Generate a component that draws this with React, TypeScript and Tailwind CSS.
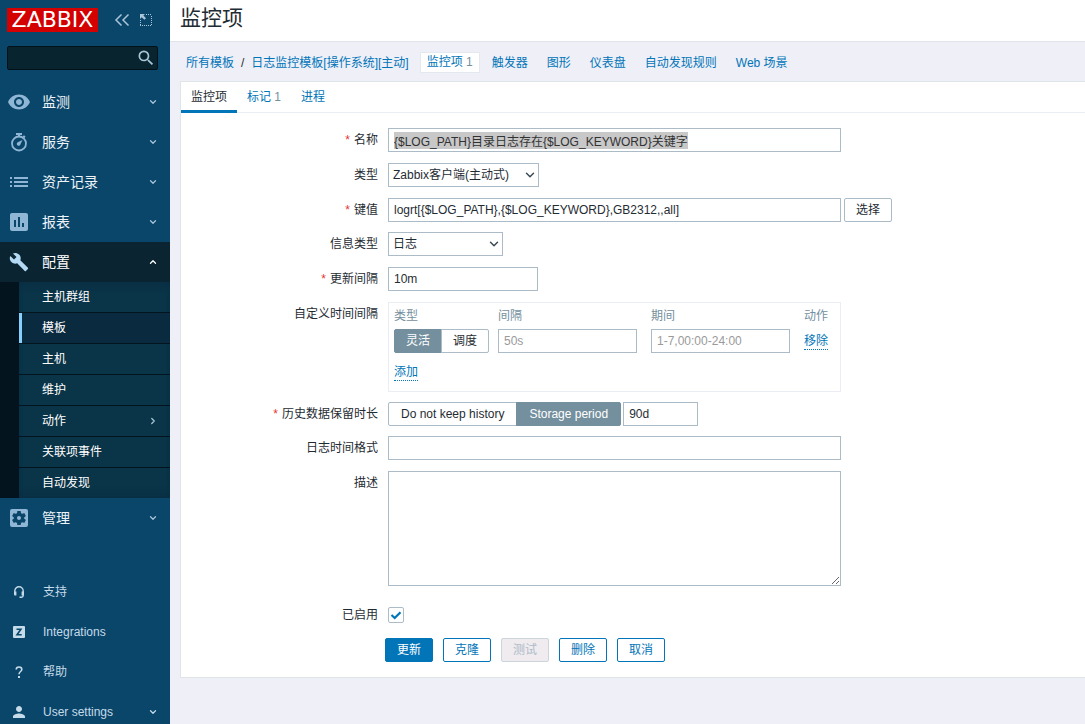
import React, { useEffect, useRef, useState } from "react";
import { ChevronDown, ChevronRight, ChevronUp } from "lucide-react";
import {
  MdAssessment,
  MdBuild,
  MdPerson,
  MdSearch,
  MdSettingsApplications,
  MdVisibility,
} from "react-icons/md";

const StopwatchIcon = () => (
  <svg width="18" height="20" viewBox="0 0 18 20" fill="none">
    <circle cx="9" cy="11.5" r="7" stroke="currentColor" strokeWidth="1.8" />
    <path d="M6 1h6v2H6zM8 2h2v3H8zM14 3.2l1.6 1.6-1.4 1.4-1.6-1.6z" fill="currentColor" />
    <path d="M12.5 8l-2 4.2a1.9 1.9 0 1 1-2.2-2.2z" fill="currentColor" />
  </svg>
);

const ListIcon = () => (
  <svg width="18" height="12" viewBox="0 0 18 12" fill="currentColor">
    <path d="M0 1h2v2H0zM4 1h14v2H4zM0 5h2v2H0zM4 5h14v2H4zM0 9h2v2H0zM4 9h14v2H4z" />
  </svg>
);

const CollapseIcon = () => (
  <svg width="16" height="14" viewBox="0 0 16 14" fill="none" stroke="currentColor" strokeWidth="1.5">
    <path d="M7.5 1.5L2 7l5.500 5.500M14.500 1.500L9 7l5.500 5.500" />
  </svg>
);

const KioskIcon = () => (
  <svg width="12" height="12" viewBox="0 0 12 12" fill="none">
    <path
      d="M6 .5h6M11.5 2v10M0 11.5h11M.5 6v5"
      stroke="currentColor"
      strokeDasharray="1 1"
    />
    <path d="M0 0h5L3.400 1.600 6 4.200 4.400 5.800 1.700 3.200 0 5z" fill="currentColor" />
  </svg>
);

const HeadsetIcon = () => (
  <svg width="12" height="12" viewBox="0 0 12 12" fill="none">
    <path d="M1.800 7V5a4.200 4.200 0 0 1 8.400 0v4.500c0 1-.8 1.700-1.800 1.700H6.500" stroke="currentColor" strokeWidth="1.4" />
    <path d="M1 5.500h2.400v4H2A1 1 0 0 1 1 8.500zM8.600 5.500H11v3a1 1 0 0 1-1 1H8.600z" fill="currentColor" />
  </svg>
);

const IntegrationsIcon = () => (
  <svg width="12" height="12" viewBox="0 0 12 12">
    <rect width="12" height="12" rx="1" fill="currentColor" />
    <path d="M3.500 3.200h4.400L4 8.800h4.700" fill="none" stroke="#0a466a" strokeWidth="1.6" />
  </svg>
);

const HelpIcon = () => (
  <svg width="8" height="12" viewBox="0 0 8 12">
    <path d="M1.200 3.600C1.200 1.900 2.300 1 4 1s2.800 1 2.800 2.500C6.800 5.500 4 5.600 4 8.300" fill="none" stroke="currentColor" strokeWidth="1.6" />
    <rect x="3" y="10" width="2" height="2" fill="currentColor" />
  </svg>
);

interface MenuItem {
  label: string;
  icon: React.ReactNode;
  arrow?: boolean;
}

const topMenu: MenuItem[] = [
  { label: "监测", icon: <MdVisibility size={24} /> },
  { label: "服务", icon: <StopwatchIcon /> },
  { label: "资产记录", icon: <ListIcon /> },
  { label: "报表", icon: <MdAssessment size={24} /> },
];

const subMenu = ["主机群组", "模板", "主机", "维护", "动作", "关联项事件", "自动发现"];

const userMenu: MenuItem[] = [
  { label: "支持", icon: <HeadsetIcon /> },
  { label: "Integrations", icon: <IntegrationsIcon /> },
  { label: "帮助", icon: <HelpIcon /> },
  { label: "User settings", icon: <MdPerson size={18} />, arrow: true },
];

const MainMenuLink: React.FC<{ item: MenuItem; open?: boolean }> = ({ item, open }) => (
  <a
    href="#"
    className={`flex h-10 items-center pr-3 text-sm ${
      open ? "bg-[#0a2531] text-white" : "text-[#eef4f8]"
    }`}
  >
    <span
      className={`flex w-[38px] shrink-0 justify-center ${open ? "text-[#b3d9f5]" : "text-[#8fb6d4]"}`}
    >
      {item.icon}
    </span>
    <span className="ml-1 flex-1">{item.label}</span>
    {open ? (
      <ChevronUp size={10} strokeWidth={3} />
    ) : (
      <ChevronDown size={10} strokeWidth={3} className="text-[#a9c5d8]" />
    )}
  </a>
);

const Sidebar = () => (
  <aside className="h-screen w-[170px] shrink-0 overflow-hidden bg-[#0a466a]">
    <div className="flex items-center pt-2 pl-[7px] text-[#a9c5d8]">
      <a
        href="#"
        className="flex h-6 w-[91px] items-center justify-center bg-[#d40000] font-['DejaVu_Sans',sans-serif] text-[22px] leading-6 text-white"
      >
        ZABBIX
      </a>
      <button type="button" aria-label="隐藏侧边栏" className="ml-4">
        <CollapseIcon />
      </button>
      <button type="button" aria-label="全屏" className="ml-2.5">
        <KioskIcon />
      </button>
    </div>
    <form
      role="search"
      className="mt-3.5 mr-3 ml-[7px] flex h-6 items-center rounded-xs border border-[#021019] bg-[#08242f]"
    >
      <input
        type="search"
        aria-label="搜索"
        className="h-full min-w-0 flex-1 bg-transparent px-1 text-white outline-none"
      />
      <button type="button" aria-label="搜索" className="mr-px text-[#a9c5d8]">
        <MdSearch size={20} />
      </button>
    </form>
    <nav className="mt-3">
      {topMenu.map((item) => (
        <MainMenuLink key={item.label} item={item} />
      ))}
      <MainMenuLink item={{ label: "配置", icon: <MdBuild size={20} /> }} open />
      <div className="bg-[#03141f] pl-[19px]">
        <ul className="divide-y divide-[#04141f] bg-[#0a3447] shadow-[inset_0_8px_8px_-6px_#0a2c45,inset_0_-8px_8px_-6px_#0a2c45]">
          {subMenu.map((label) => (
            <li key={label}>
              <a
                href="#"
                className={`flex h-[30px] items-center border-l-3 pr-3 pl-5 text-white ${
                  label === "模板" ? "border-[#85d0ff] bg-[#0a2a40]" : "border-transparent"
                }`}
              >
                <span className="flex-1">{label}</span>
                {label === "动作" && (
                  <ChevronRight size={10} strokeWidth={3} className="text-[#a9c5d8]" />
                )}
              </a>
            </li>
          ))}
        </ul>
      </div>
      <MainMenuLink item={{ label: "管理", icon: <MdSettingsApplications size={24} /> }} />
    </nav>
    <nav className="mt-[34px] text-[#c5dbe9]">
      {userMenu.map((item) => (
        <a key={item.label} href="#" className="flex h-10 items-center pr-3">
          <span className="flex w-[38px] justify-center">{item.icon}</span>
          <span className="ml-[5px] flex-1">{item.label}</span>
          {item.arrow && <ChevronDown size={10} strokeWidth={3} />}
        </a>
      ))}
    </nav>
  </aside>
);

const linkColor = "text-[#0275b8]";
const fieldStyle =
  "h-6 border border-[#acbbc8] bg-white px-[5px] leading-[15px] text-[#1f2c33] outline-none placeholder:text-[#9a9a9a]";

interface RowProps {
  label: string;
  htmlFor?: string;
  required?: boolean;
  className?: string;
  children: React.ReactNode;
}

const FormRow: React.FC<RowProps> = ({ label, htmlFor, required, className, children }) => (
  <div className={`flex items-start ${className ?? "mb-[11px]"}`}>
    <label htmlFor={htmlFor} className="w-[207px] shrink-0 pr-2.5 text-right leading-6">
      {required && <span className="mr-1 text-[#e33734]">*</span>}
      {label}
    </label>
    {children}
  </div>
);

const SelectField: React.FC<{ id: string; options: string[]; className: string }> = ({
  id,
  options,
  className,
}) => (
  <div className={`grid items-center ${className}`}>
    <select
      id={id}
      className="col-start-1 row-start-1 h-6 w-full appearance-none border border-[#acbbc8] bg-white pl-1 outline-none"
    >
      {options.map((option) => (
        <option key={option}>{option}</option>
      ))}
    </select>
    <ChevronDown
      size={14}
      strokeWidth={2.5}
      className="pointer-events-none col-start-1 row-start-1 mr-0.5 justify-self-end text-[#3c4a55]"
    />
  </div>
);

interface SegmentedProps {
  name: string;
  options: string[];
  initial: string;
  padding: string;
}

const Segmented: React.FC<SegmentedProps> = ({ name, options, initial, padding }) => {
  const [value, setValue] = useState(initial);

  return (
    <div role="radiogroup" aria-label={name} className="relative flex h-6">
      {options.map((option) => (
        <label
          key={option}
          className={`flex items-center border first:rounded-l-xs last:rounded-r-xs not-first:-ml-px ${padding} ${
            value === option
              ? "border-[#748f9e] bg-[#748f9e] text-white"
              : "border-[#acbbc8] bg-white"
          }`}
        >
          <input
            type="radio"
            name={name}
            value={option}
            checked={value === option}
            onChange={() => setValue(option)}
            className="sr-only"
          />
          {option}
        </label>
      ))}
    </div>
  );
};

const IntervalTable = () => (
  <div className="w-[453px] border border-[#ebedf5] px-[5px] pt-[3px] pb-2.5">
    <table className="w-full table-fixed text-left">
      <thead>
        <tr className="h-[23px] align-top leading-5 text-[#748f9e]">
          <th className="w-[104px] font-normal">类型</th>
          <th className="w-[153px] font-normal">间隔</th>
          <th className="w-[153px] font-normal">期间</th>
          <th className="font-normal">动作</th>
        </tr>
      </thead>
      <tbody>
        <tr>
          <td>
            <Segmented
              name="interval-type"
              options={["灵活", "调度"]}
              initial="灵活"
              padding="px-[11px]"
            />
          </td>
          <td>
            <input aria-label="间隔" placeholder="50s" className={`${fieldStyle} block w-[139px]`} />
          </td>
          <td>
            <input
              aria-label="期间"
              placeholder="1-7,00:00-24:00"
              className={`${fieldStyle} block w-[139px]`}
            />
          </td>
          <td>
            <button type="button" className={`border-b border-dotted border-[#0275b8] leading-4 ${linkColor}`}>
              移除
            </button>
          </td>
        </tr>
      </tbody>
    </table>
    <button
      type="button"
      className={`mt-[11px] block border-b border-dotted border-[#0275b8] leading-4 ${linkColor}`}
    >
      添加
    </button>
  </div>
);

const ItemForm = () => {
  const [name, setName] = useState("{$LOG_PATH}目录日志存在{$LOG_KEYWORD}关键字");
  const [enabled, setEnabled] = useState(true);
  const nameRef = useRef<HTMLInputElement>(null);

  useEffect(() => {
    nameRef.current?.focus();
    nameRef.current?.select();
  }, []);

  const outlineButton = `h-6 w-12 rounded-xs border border-[#0275b8] bg-white ${linkColor}`;

  return (
    <form className="pt-[15px] pb-[15px]" onSubmit={(e) => e.preventDefault()}>
      <FormRow label="名称" htmlFor="name" required>
        <input
          id="name"
          ref={nameRef}
          value={name}
          onChange={(e) => setName(e.target.value)}
          className={`${fieldStyle} w-[453px] selection:bg-[#c8c8c8] selection:text-[#323232]`}
        />
      </FormRow>
      <FormRow label="类型" htmlFor="type">
        <SelectField id="type" options={["Zabbix客户端(主动式)"]} className="w-[151px]" />
      </FormRow>
      <FormRow label="键值" htmlFor="key" required className="mb-2.5">
        <input
          id="key"
          defaultValue="logrt[{$LOG_PATH},{$LOG_KEYWORD},GB2312,,all]"
          className={`${fieldStyle} w-[453px]`}
        />
        <button type="button" className="ml-[3px] h-6 w-12 rounded-xs border border-[#acbbc8] bg-white">
          选择
        </button>
      </FormRow>
      <FormRow label="信息类型" htmlFor="value-type">
        <SelectField id="value-type" options={["日志"]} className="w-[115px]" />
      </FormRow>
      <FormRow label="更新间隔" htmlFor="delay" required>
        <input id="delay" defaultValue="10m" className={`${fieldStyle} w-[150px]`} />
      </FormRow>
      <FormRow label="自定义时间间隔" className="mb-2.5">
        <IntervalTable />
      </FormRow>
      <FormRow label="历史数据保留时长" htmlFor="history" required className="mb-2.5">
        <Segmented
          name="history-mode"
          options={["Do not keep history", "Storage period"]}
          initial="Storage period"
          padding="px-3"
        />
        <input id="history" defaultValue="90d" className={`${fieldStyle} ml-0.5 w-[75px]`} />
      </FormRow>
      <FormRow label="日志时间格式" htmlFor="logtimefmt">
        <input id="logtimefmt" className={`${fieldStyle} w-[453px]`} />
      </FormRow>
      <FormRow label="描述" htmlFor="description" className="mb-[17px]">
        <textarea
          id="description"
          className="h-[115px] w-[453px] border border-[#acbbc8] bg-white px-[5px] py-1 outline-none"
        />
      </FormRow>
      <FormRow label="已启用" htmlFor="enabled">
        <span className="mt-1 grid">
          <input
            id="enabled"
            type="checkbox"
            checked={enabled}
            onChange={(e) => setEnabled(e.target.checked)}
            className="col-start-1 row-start-1 size-4 appearance-none rounded-xs border border-[#acbbc8] bg-white"
          />
          {enabled && (
            <svg
              viewBox="0 0 16 16"
              className="pointer-events-none col-start-1 row-start-1 size-4"
              fill="none"
              stroke="#0275b8"
              strokeWidth="2.2"
            >
              <path d="M3.500 8l3.200 3L12.500 5.200" />
            </svg>
          )}
        </span>
      </FormRow>
      <div className="flex gap-2.5 pl-[204px]">
        <button type="submit" className="h-6 w-12 rounded-xs border border-[#0275b8] bg-[#0275b8] text-white">
          更新
        </button>
        <button type="button" className={outlineButton}>
          克隆
        </button>
        <button
          type="button"
          disabled
          className="h-6 w-12 rounded-xs border border-[#ccd5db] bg-[#efebef] text-[#acbbc8]"
        >
          测试
        </button>
        <button type="button" className={outlineButton}>
          删除
        </button>
        <button type="button" className={outlineButton}>
          取消
        </button>
      </div>
    </form>
  );
};

const App = () => {
  return (
    <div className="flex min-h-screen bg-[#eeeff7] font-['Liberation_Sans','Noto_Sans_CJK_SC',sans-serif] text-xs text-[#1f2c33]">
      <Sidebar />
      <main className="min-w-0 flex-1">
        <header className="h-[42px] border-b border-[#dfe4ea] bg-white pl-2.5">
          <h1 className="text-[21px] leading-9">监控项</h1>
        </header>
        <nav className={`flex h-[39px] items-center pt-0.5 pl-4 whitespace-nowrap ${linkColor}`}>
          <a href="#">所有模板</a>
          <span className="mx-[7px] text-[#1f2c33]">/</span>
          <a href="#">日志监控模板[操作系统][主动]</a>
          <a href="#" className="ml-[11px] border border-[#e4e8ef] bg-white px-1.5 leading-[19px]">
            监控项 <span className="text-[#748f9e]">1</span>
          </a>
          <div className="ml-3 flex gap-[19px]">
            <a href="#">触发器</a>
            <a href="#">图形</a>
            <a href="#">仪表盘</a>
            <a href="#">自动发现规则</a>
            <a href="#">Web 场景</a>
          </div>
        </nav>
        <section className="ml-2.5 border border-r-0 border-[#dfe4e7] bg-white">
          <div className={`flex h-[31px] border-b border-[#ebeef5] leading-[30px] ${linkColor}`}>
            <a href="#" className="-mb-px border-b-3 border-[#0275b8] px-2.5 text-[#1f2c33]">
              监控项
            </a>
            <a href="#" className="px-2.5">
              标记 <span className="text-[#748f9e]">1</span>
            </a>
            <a href="#" className="px-2.5">
              进程
            </a>
          </div>
          <ItemForm />
        </section>
      </main>
    </div>
  );
};

export default App;
